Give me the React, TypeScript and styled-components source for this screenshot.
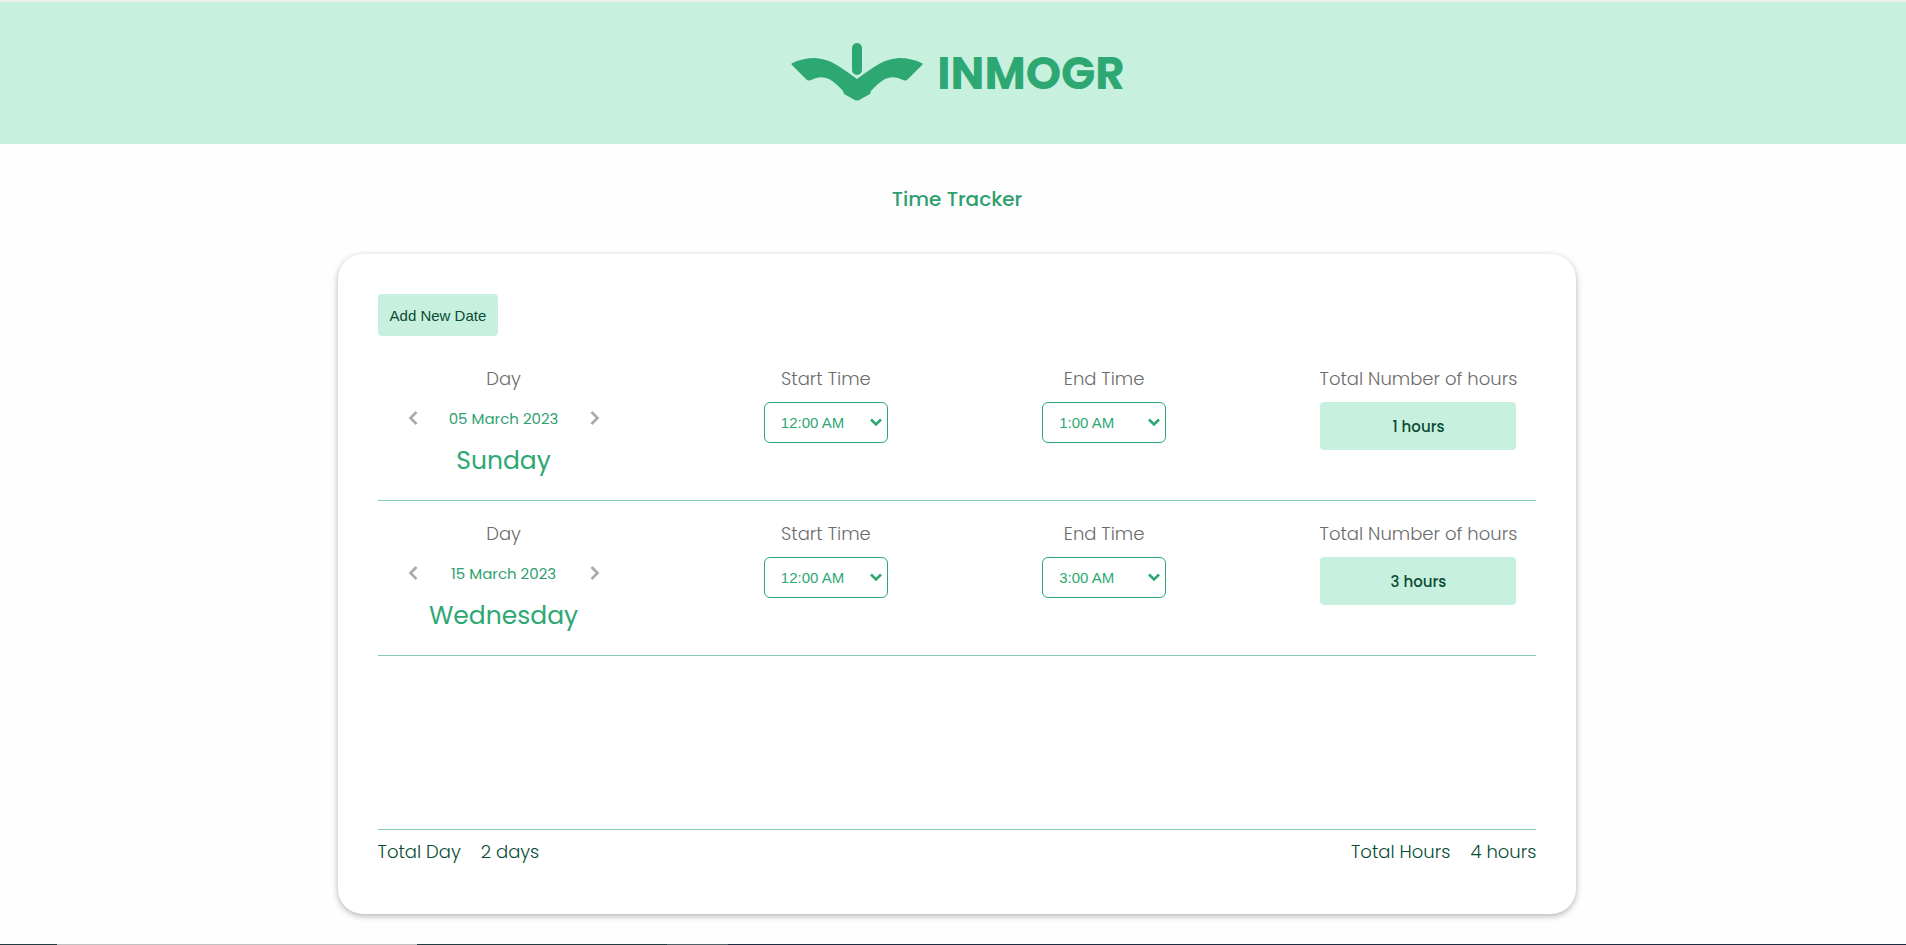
import React from "react";
import styled, { createGlobalStyle } from "styled-components";

const green = "#2da873";
const mint = "#c8f0df";
const dark = "#084c33";
const line = "#86ccb0";

const GlobalStyle = createGlobalStyle`
  *, *::before, *::after { box-sizing: border-box; }
  body {
    margin: 0;
    background: #fefefe;
    font-family: Poppins, Inter, sans-serif;
    color: ${dark};
  }
`;

const Page = styled.div`
  min-height: 100vh;
  display: flex;
  flex-direction: column;
`;

const Header = styled.header`
  display: flex;
  align-items: center;
  justify-content: center;
  gap: 14px;
  height: 144px;
  padding: 0 0 2px 10px;
  border-top: 2px solid #eceeed;
  background: ${mint};
`;

const Mark = styled.svg`
  width: 132px;
  height: 60px;
  fill: ${green};
`;

const Brand = styled.span`
  padding-top: 4px;
  font-size: 45px;
  line-height: 60px;
  font-weight: 700;
  color: ${green};
`;

const Main = styled.main`
  flex: 1;
  display: flex;
  flex-direction: column;
  align-items: center;
  padding: 40px 0 30px 8px;
`;

const Title = styled.h1`
  margin: 0 0 40px;
  font-size: 20px;
  line-height: 30px;
  font-weight: 500;
  color: #2f9f6f;
`;

const Card = styled.section`
  flex: 1;
  display: flex;
  flex-direction: column;
  width: 65vw;
  min-width: 900px;
  padding: 40px;
  border-radius: 25px;
  background: #fff;
  box-shadow: 0 2px 6px rgba(0, 0, 0, 0.3);
`;

const AddButton = styled.button`
  align-self: flex-start;
  height: 42px;
  margin-bottom: 10px;
  padding: 0 12px;
  border: 0;
  border-radius: 4px;
  background: ${mint};
  color: ${dark};
  font: 15px "Liberation Sans", Arial, sans-serif;
`;

const Entries = styled.div`
  flex: 1;
`;

const Entry = styled.div`
  display: flex;
  justify-content: space-between;
  align-items: flex-start;
  padding: 20px;
  border-bottom: 1px solid ${line};
`;

const Column = styled.div<{ $width: number }>`
  display: flex;
  flex-direction: column;
  align-items: center;
  width: ${(p) => p.$width}px;
`;

const Label = styled.label`
  margin-bottom: 10px;
  font-size: 18px;
  line-height: 26px;
  font-weight: 300;
  color: #6c6c6c;
  white-space: nowrap;
`;

const DatePicker = styled.div`
  display: flex;
  align-items: center;
  justify-content: space-between;
  width: 100%;
  height: 32px;
  margin-bottom: 6px;
`;

const ArrowButton = styled.button`
  display: grid;
  place-items: center;
  width: 30px;
  height: 30px;
  padding: 0;
  border: 0;
  background: none;
  color: #aaa;
`;

const DateText = styled.span`
  padding-top: 2px;
  font-size: 15px;
  line-height: 32px;
  color: #2f9f6f;
`;

const Weekday = styled.span`
  padding-top: 2px;
  font-size: 25px;
  line-height: 38px;
  color: ${green};
`;

const SelectWrap = styled.div`
  display: grid;
  width: 100%;
  align-items: center;

  > * { grid-area: 1 / 1; }
  > svg {
    justify-self: end;
    margin-right: 6px;
    pointer-events: none;
    color: ${green};
  }
`;

const Select = styled.select`
  appearance: none;
  width: 100%;
  height: 41px;
  padding: 0 24px 0 16px;
  border: 1px solid ${green};
  border-radius: 6px;
  background: #fff;
  color: ${green};
  font: 15px "Liberation Sans", Arial, sans-serif;
`;

const Hours = styled.output`
  display: block;
  width: 100%;
  padding-top: 2px;
  border-radius: 4px;
  background: ${mint};
  font-size: 15px;
  line-height: 46px;
  font-weight: 500;
  text-align: center;
`;

const Totals = styled.footer`
  display: flex;
  justify-content: space-between;
  padding: 8px 0;
  border-top: 1px solid ${line};
  font-size: 18px;
  line-height: 28px;
  font-weight: 300;
`;

const Total = styled.div`
  display: flex;
  gap: 20px;
`;

const BottomStrip = styled.div`
  height: 1px;
  background: linear-gradient(
    to right,
    #203c3e 57px,
    #c0c0c0 57px 417px,
    #203c3e 417px 667px,
    #4f6367 667px 728px,
    #1d2c40 728px
  );
`;

const times = ["12:00 AM", "1:00 AM", "2:00 AM", "3:00 AM"];

const entries = [
  { date: "05 March 2023", weekday: "Sunday", start: "12:00 AM", end: "1:00 AM", hours: 1 },
  { date: "15 March 2023", weekday: "Wednesday", start: "12:00 AM", end: "3:00 AM", hours: 3 },
];

function Chevron({ d, width, height }: { d: string; width: number; height: number }) {
  return (
    <svg width={width} height={height} viewBox={`0 0 ${width} ${height}`} fill="none" stroke="currentColor" strokeWidth="2.6" aria-hidden="true">
      <path d={d} />
    </svg>
  );
}

function TimeSelect({ id, label, value }: { id: string; label: string; value: string }) {
  return (
    <Column $width={124}>
      <Label htmlFor={id}>{label}</Label>
      <SelectWrap>
        <Select id={id} defaultValue={value}>
          {times.map((t) => (
            <option key={t}>{t}</option>
          ))}
        </Select>
        <Chevron d="M1 1.5L6 6.5L11 1.5" width={12} height={9} />
      </SelectWrap>
    </Column>
  );
}

export default function App() {
  const total = entries.reduce((sum, e) => sum + e.hours, 0);
  return (
    <Page>
      <GlobalStyle />
      <Header>
        <Mark viewBox="0 0 132 60" aria-hidden="true">
          <rect x="61" y="1" width="10" height="32" rx="5" />
          <path d="M0.5 21.5Q11 16 24 16Q38 17 49 25Q58 31 66 37Q74 31 83 25Q94 17 108 16Q121 16 131.500 21.500Q132 22 131 23L117 37Q115 39.500 112 38Q103 33 94 37Q87 41 80 49L79 52L70 57Q66 60 62 57L53 52L52 49Q45 41 38 37Q29 33 20 38Q17 39.500 15 37L1 23Q0 22 0.500 21.500Z" />
        </Mark>
        <Brand>INMOGR</Brand>
      </Header>
      <Main>
        <Title>Time Tracker</Title>
        <Card>
          <AddButton type="button">Add New Date</AddButton>
          <Entries>
            {entries.map((e, i) => (
              <Entry key={e.date}>
                <Column $width={212}>
                  <Label as="span">Day</Label>
                  <DatePicker>
                    <ArrowButton type="button" aria-label="Previous day">
                      <Chevron d="M8.500 1L2.500 7L8.500 13" width={10} height={14} />
                    </ArrowButton>
                    <DateText>{e.date}</DateText>
                    <ArrowButton type="button" aria-label="Next day">
                      <Chevron d="M1.500 1L7.500 7L1.500 13" width={10} height={14} />
                    </ArrowButton>
                  </DatePicker>
                  <Weekday>{e.weekday}</Weekday>
                </Column>
                <TimeSelect id={`start-${i}`} label="Start Time" value={e.start} />
                <TimeSelect id={`end-${i}`} label="End Time" value={e.end} />
                <Column $width={196}>
                  <Label htmlFor={`hours-${i}`}>Total Number of hours</Label>
                  <Hours id={`hours-${i}`}>{e.hours} hours</Hours>
                </Column>
              </Entry>
            ))}
          </Entries>
          <Totals>
            <Total>
              <span>Total Day</span>
              <span>{entries.length} days</span>
            </Total>
            <Total>
              <span>Total Hours</span>
              <span>{total} hours</span>
            </Total>
          </Totals>
        </Card>
      </Main>
      <BottomStrip />
    </Page>
  );
}
